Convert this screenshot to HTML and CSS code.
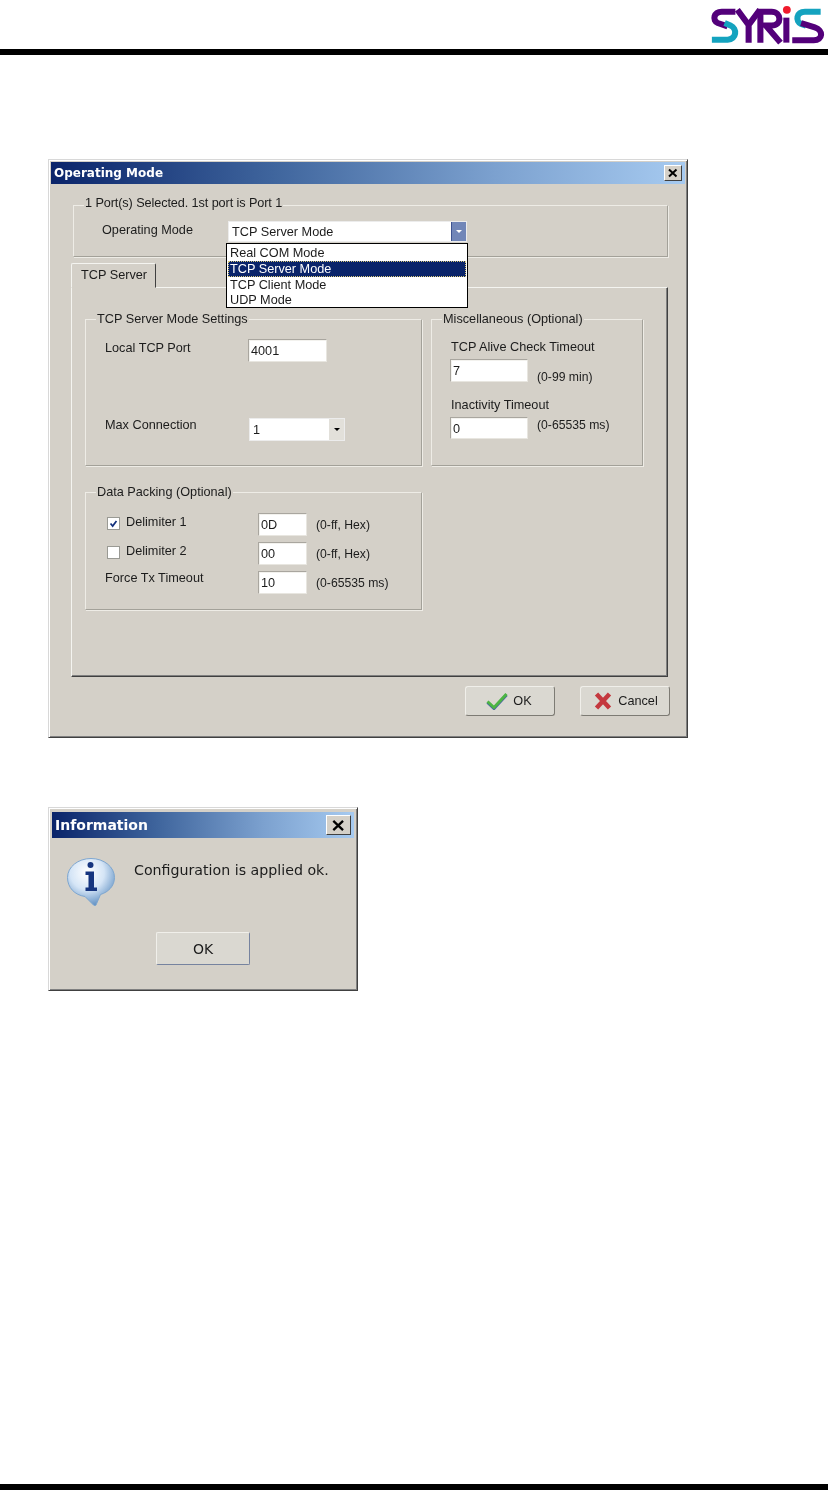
FILE: index.html
```html
<!DOCTYPE html>
<html lang="en">
<head>
<meta charset="utf-8">
<title>Operating Mode</title>
<link rel="stylesheet" href="styles.css">
</head>
<body>
<header class="page-head">
  <svg class="logo" viewBox="0 0 150 50" role="img" aria-label="SYRIS">
    <g fill="none" stroke-width="6.200" stroke-linecap="butt">
      <path class="purple" d="M55 12H41C33 12 31 21 37 23.500L47 27" />
      <path class="teal" d="M44 23.500L50 26C57 29 56.500 40 47 40.500H31" />
      <path class="purple" d="M57 10L68.500 25.500M80 10L68.500 25.500V43.500" />
      <path class="purple" d="M80.500 43.500V12H92C102 12 103 26 92 26H86L101 43.500" />
      <path class="purple" d="M107 18V43.500" />
      <path class="teal" d="M142 12H126C117 12 116 22 122 24.500L127 26" />
      <path class="purple" d="M122 23.500L136 28C145 31 144.500 41 135 41H113" />
    </g>
    <circle class="red" cx="107.500" cy="10" r="4" />
  </svg>
</header>

<main class="page-main">
  <section class="dialog dialog-op">
    <div class="title-bar">
      <span class="title-text">Operating Mode</span>
      <span class="close"><svg viewBox="0 0 10 10"><path d="M1 1.500L8.500 8.500M8.500 1.500L1 8.500" /></svg></span>
    </div>

    <div class="group group-mode">
      <div class="legend legend-mode">1 Port(s) Selected. 1st port is Port 1</div>
      <div class="mode-row">
        <span class="mode-label">Operating Mode</span>
        <div class="combo combo-mode">
          <span class="combo-value">TCP Server Mode</span>
          <span class="arrow arrow-blue"></span>
          <ul class="list">
            <li>Real COM Mode</li>
            <li class="selected">TCP Server Mode</li>
            <li>TCP Client Mode</li>
            <li>UDP Mode</li>
          </ul>
        </div>
      </div>
    </div>

    <div class="tab">TCP Server</div>
    <div class="panel">
      <div class="col-left">
        <div class="group group-tcp">
          <div class="legend">TCP Server Mode Settings</div>
          <div class="row row-port">
            <span class="label label-wide">Local TCP Port</span>
            <span class="input input-port">4001</span>
          </div>
          <div class="row row-max">
            <span class="label label-wide label-max">Max Connection</span>
            <div class="combo combo-max">
              <span class="combo-value">1</span>
              <span class="arrow arrow-gray"></span>
            </div>
          </div>
        </div>
        <div class="group group-data">
          <div class="legend">Data Packing (Optional)</div>
          <div class="row row-data first">
            <span class="check"><svg viewBox="0 0 13 13"><path d="M3 6.500L5.500 9.500L10 3.500" /></svg></span>
            <span class="label label-check">Delimiter 1</span>
            <span class="input input-hex">0D</span>
            <span class="unit">(0-ff, Hex)</span>
          </div>
          <div class="row row-data">
            <span class="check"></span>
            <span class="label label-check">Delimiter 2</span>
            <span class="input input-hex">00</span>
            <span class="unit">(0-ff, Hex)</span>
          </div>
          <div class="row row-data">
            <span class="label label-force">Force Tx Timeout</span>
            <span class="input input-hex">10</span>
            <span class="unit">(0-65535 ms)</span>
          </div>
        </div>
      </div>
      <div class="group group-misc">
        <div class="legend">Miscellaneous (Optional)</div>
        <div class="misc-label first">TCP Alive Check Timeout</div>
        <div class="row misc-row">
          <span class="input input-misc">7</span>
          <span class="unit unit-low">(0-99 min)</span>
        </div>
        <div class="misc-label second">Inactivity Timeout</div>
        <div class="row misc-row">
          <span class="input input-misc short">0</span>
          <span class="unit unit-high">(0-65535 ms)</span>
        </div>
      </div>
    </div>

    <div class="actions">
      <button class="btn btn-ok">
        <svg class="btn-icon" viewBox="0 0 22 17">
          <path class="tick-shadow" d="M1.500 9.500L8 15.500L20.500 2" />
          <path class="tick" d="M1.500 8.500L8 14.500L20.500 1" />
        </svg>
        <span>OK</span>
      </button>
      <button class="btn btn-cancel">
        <svg class="btn-icon btn-icon-x" viewBox="0 0 18 18">
          <path class="cross" d="M2.500 2L15.500 16M15.500 2L2.500 16" />
        </svg>
        <span>Cancel</span>
      </button>
    </div>
  </section>

  <section class="dialog dialog-info">
    <div class="title-bar title-info">
      <span class="title-text">Information</span>
      <span class="close close-info"><svg viewBox="0 0 10 10"><path d="M1 1.500L8.500 8.500M8.500 1.500L1 8.500" /></svg></span>
    </div>
    <div class="info-body">
      <svg class="info-icon" viewBox="0 0 48 48">
        <defs>
          <radialGradient id="bubble" cx="0.42" cy="0.3" r="0.72">
            <stop offset="0" stop-color="#ffffff" />
            <stop offset="0.5" stop-color="#d5e5f6" />
            <stop offset="1" stop-color="#5f8fc2" />
          </radialGradient>
        </defs>
        <path class="bubble" d="M24 .5C37 .5 47.500 9 47.500 19.500C47.500 28 41.500 34 33.500 36.500L29 47C28.500 48 27.500 48 26.500 47L18 38.500C7.500 37 .5 29.500 .5 19.500C.5 9 11 .5 24 .5Z" />
        <circle class="dot" cx="23.500" cy="7" r="3" />
        <path class="stem" d="M18.500 13.500H27V29.500H30V33H18.500V29.500H21.500V17H18.500Z" />
      </svg>
      <span class="info-text">Configuration is applied ok.</span>
    </div>
    <button class="btn btn-info">OK</button>
  </section>
</main>

<footer class="page-foot"></footer>
</body>
</html>
```

FILE: styles.css
```css
* {
  box-sizing: border-box;
}

html,
body {
  margin: 0;
  padding: 0;
}

body {
  display: flex;
  flex-direction: column;
  width: 830px;
  height: 1490px;
  background: #fff;
  color: #1c1c1c;
  font-family: "Liberation Sans", Arial, sans-serif;
  font-size: 12.700px;
  line-height: 16px;
  overflow: hidden;
}

/* page frame */
.page-head {
  display: flex;
  justify-content: flex-end;
  width: 828px;
  height: 55px;
  border-bottom: 6px solid #000;
}

.logo {
  width: 150px;
  height: 49px;
  flex: none;
  margin-right: -2px;
}

.purple {
  stroke: #53007a;
}

.teal {
  stroke: #14a3bf;
}

.red {
  fill: #f01a2c;
}

.page-main {
  display: flex;
  flex-direction: column;
  align-items: flex-start;
  padding: 104px 0 0 48px;
}

.page-foot {
  width: 828px;
  height: 6px;
  margin-top: auto;
  background: #000;
}

/* dialog frames */
.dialog {
  position: relative;
  background: #d4d0c8;
  border: 1px solid;
  border-color: #d8d8d8 #404040 #404040 #d8d8d8;
  box-shadow: inset 1px 1px 0 #fff, inset -1px -1px 0 #808080;
  filter: blur(0.3px);
}

.dialog-op {
  width: 640px;
  height: 579px;
  padding: 2px;
}

.dialog-info {
  width: 310px;
  height: 184px;
  margin-top: 69px;
  padding: 4px 3px;
}

.title-bar {
  display: flex;
  align-items: center;
  justify-content: space-between;
  height: 22px;
  padding: 0 3px;
  background: linear-gradient(90deg, #0a246a, #3f659d 35%, #7ca1cf 70%, #a6caf0);
}

.title-text {
  color: #fff;
  font-family: "DejaVu Sans", sans-serif;
  font-size: 12px;
  font-weight: 700;
}

.close {
  display: flex;
  align-items: center;
  justify-content: center;
  width: 18px;
  height: 16px;
  background: #d4d0c8;
  border: 1px solid;
  border-color: #fff #404040 #404040 #fff;
}

.close svg {
  width: 10px;
  height: 10px;
}

.close path {
  fill: none;
  stroke: #000;
  stroke-width: 2;
}

/* group boxes */
.group {
  border: 1px solid;
  border-color: #eeece6 #a3a199 #a3a199 #eeece6;
  box-shadow: 1px 1px 0 #eeece6;
}

.legend {
  width: fit-content;
  margin: -9px 0 0 10px;
  padding: 0 1px;
  background: #d4d0c8;
  white-space: nowrap;
}

.group-mode {
  width: 595px;
  height: 52px;
  margin: 21px 0 0 22px;
}

.legend-mode {
  margin-top: -11px;
  letter-spacing: -0.1px;
}

.mode-row {
  display: flex;
  margin: 10px 0 0 28px;
}

.mode-label {
  width: 126px;
  margin-top: 1px;
}

/* combos */
.combo {
  position: relative;
  display: flex;
  align-items: center;
  justify-content: space-between;
  background: #fff;
  border: 1px solid #ececec;
}

.combo-mode {
  width: 239px;
  height: 21px;
  padding-left: 3px;
}

.combo-max {
  width: 96px;
  height: 23px;
  margin-left: 1px;
  padding-left: 3px;
}

.arrow {
  display: flex;
  align-items: center;
  justify-content: center;
  flex: none;
  align-self: stretch;
  width: 15px;
}

.arrow::after {
  content: "";
  border: 3px solid transparent;
  border-bottom: 0;
  border-top-width: 3px;
}

.arrow-blue {
  background: #7186b8;
  border-left: 1px solid #3e5391;
}

.arrow-blue::after {
  border-top-color: #fff;
}

.arrow-gray {
  background: #e2e0da;
}

.arrow-gray::after {
  border-top-color: #000;
}

.list {
  position: absolute;
  z-index: 2;
  top: 21px;
  left: -3px;
  width: 242px;
  height: 65px;
  margin: 0;
  padding: 1px;
  list-style: none;
  background: #fff;
  border: 1px solid #000;
}

.list li {
  height: 15.750px;
  padding-left: 2px;
  line-height: 17px;
}

.list .selected {
  background: #0a246a;
  color: #fff;
  outline: 1px dotted #d9c97a;
  outline-offset: -1px;
}

/* tabs */
.tab {
  position: relative;
  z-index: 1;
  width: 85px;
  height: 25px;
  margin: 6px 0 0 20px;
  padding: 3px 0 0 9px;
  background: #d4d0c8;
  border: 1px solid;
  border-color: #f4f4f0 #404040 #d4d0c8 #f4f4f0;
  border-radius: 2px 2px 0 0;
}

.panel {
  display: flex;
  align-items: flex-start;
  gap: 9px;
  width: 597px;
  height: 390px;
  margin: -1px 0 0 20px;
  padding: 31px 0 0 13px;
  border: 1px solid;
  border-color: #f4f4f0 #404040 #404040 #f4f4f0;
  box-shadow: inset -1px -1px 0 #808080;
}

.col-left {
  display: flex;
  flex-direction: column;
  gap: 26px;
  width: 337px;
}

.group-tcp,
.group-misc {
  height: 147px;
}

.group-data {
  height: 118px;
}

.group-misc {
  width: 212px;
  padding-left: 19px;
}

.group-misc .legend {
  margin-left: -9px;
}

.row {
  display: flex;
  align-items: flex-start;
}

.row-port {
  margin: 12px 0 0 19px;
}

.row-max {
  margin: 56px 0 0 19px;
}

.label-wide {
  width: 143px;
  margin-top: 1px;
}

.label-max {
  margin-top: -1px;
}

/* inputs */
.input {
  display: block;
  height: 23px;
  padding: 3px 2px 0;
  background: #fff;
  border: 1px solid;
  border-color: #a9a69f #e8e6e0 #e8e6e0 #a9a69f;
  box-shadow: inset 1px 1px 0 #f3f2ee;
}

.input-port {
  width: 79px;
}

.input-hex {
  width: 49px;
  margin-left: 0;
}

.input-misc {
  width: 78px;
  margin-left: -1px;
}

.input-misc.short {
  height: 22px;
}

.unit {
  margin: 4px 0 0 9px;
  white-space: nowrap;
  font-size: 12.200px;
}

.unit-low {
  margin-top: 10px;
}

.unit-high {
  margin-top: 0;
}

/* data packing rows */
.row-data {
  height: 23px;
  margin: 6px 0 0 19px;
}

.row-data.first {
  margin-top: 13px;
}

.check {
  display: block;
  flex: none;
  width: 13px;
  height: 13px;
  margin: 4px 0 0 2px;
  background: #fff;
  border: 1px solid #9a9a94;
}

.check svg {
  display: block;
  width: 11px;
  height: 11px;
}

.check path {
  fill: none;
  stroke: #12307c;
  stroke-width: 2;
}

.label-check {
  width: 132px;
  margin: 1px 0 0 6px;
}

.label-force {
  width: 153px;
  margin-top: -1px;
}

.misc-label {
  white-space: nowrap;
}

.misc-label.first {
  margin-top: 12px;
}

.misc-label.second {
  margin-top: 12px;
}

.misc-row {
  margin-top: 4px;
}

/* buttons */
.actions {
  display: flex;
  justify-content: flex-end;
  gap: 25px;
  margin: 9px 15px 0 0;
}

.btn {
  display: flex;
  align-items: center;
  justify-content: center;
  width: 90px;
  height: 30px;
  padding: 0;
  color: #1c1c1c;
  font: inherit;
  background: #dad8d1;
  border: 1px solid;
  border-color: #f0efea #7d7b74 #7d7b74 #f0efea;
  border-radius: 3px;
}

.btn-ok {
  padding-right: 2px;
}

.btn-cancel {
  padding-left: 2px;
}

.btn-icon {
  width: 22px;
  height: 17px;
  margin-right: 5px;
}

.btn-icon-x {
  width: 18px;
  height: 18px;
  margin-right: 6px;
}

.tick,
.tick-shadow,
.cross {
  fill: none;
}

.tick {
  stroke: #4cb544;
  stroke-width: 3;
}

.tick-shadow {
  stroke: #4a5fa8;
  stroke-width: 3;
}

.cross {
  stroke: #c4383e;
  stroke-width: 4.500;
}

/* information dialog */
.title-info {
  height: 26px;
}

.title-info .title-text {
  font-size: 14px;
}

.close-info {
  width: 25px;
  height: 20px;
}

.close-info svg {
  width: 13px;
  height: 13px;
}

.close-info path {
  stroke-width: 1.800;
}

.info-body {
  display: flex;
  align-items: flex-start;
  margin: 20px 0 0 15px;
}

.info-icon {
  flex: none;
  width: 48px;
  height: 48px;
}

.bubble {
  fill: url(#bubble);
  stroke: #7ea6cf;
}

.dot {
  fill: #16357f;
}

.stem {
  fill: #16357f;
}

.info-text {
  margin: 4px 0 0 19px;
  font-family: "DejaVu Sans", sans-serif;
  font-size: 14.200px;
}

.btn-info {
  width: 94px;
  height: 33px;
  margin: 26px 0 0 104px;
  font-family: "DejaVu Sans", sans-serif;
  font-size: 14px;
  border-radius: 2px;
  border-color: #f0efea #76839f #76839f #f0efea;
}
```
